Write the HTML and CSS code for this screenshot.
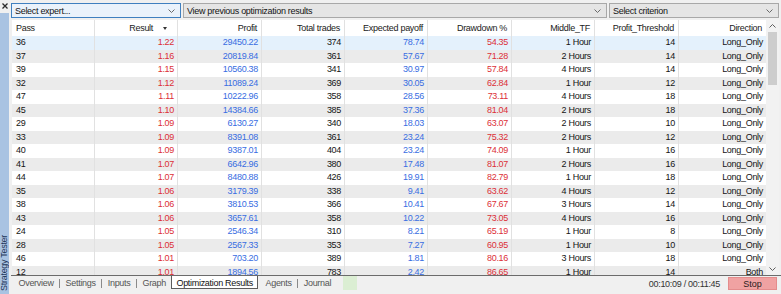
FILE: index.html
```html
<!DOCTYPE html>
<html lang="en">
<head>
    <meta charset="UTF-8">
    <title>Strategy Tester - Optimization Results</title>
    <link rel="stylesheet" href="styles.css">
</head>
<body>
    <div class="tester">
        <!-- Docked panel handle -->
        <aside class="side">
            <div class="side-close">
                <svg width="6" height="6" viewBox="0 0 6 6"><path d="M0.5 0.5L5.5 5.5M5.5 0.5L0.5 5.5" stroke="#2b2b2b" stroke-width="1.3"/></svg>
            </div>
            <div class="side-strip"><span class="side-title">Strategy Tester</span></div>
        </aside>

        <main class="panel">
            <!-- Top selectors -->
            <div class="toolbar">
                <div class="combo focus combo-expert">
                    <span>Select expert...</span>
                    <svg width="7" height="4" viewBox="0 0 7 4"><polyline points="0.5,0.5 3.5,3.5 6.5,0.5" fill="none" stroke="#6a6a6a"/></svg>
                </div>
                <div class="combo combo-results">
                    <span>View previous optimization results</span>
                    <svg width="7" height="4" viewBox="0 0 7 4"><polyline points="0.5,0.5 3.5,3.5 6.5,0.5" fill="none" stroke="#6a6a6a"/></svg>
                </div>
                <div class="combo combo-criterion">
                    <span>Select criterion</span>
                    <svg width="7" height="4" viewBox="0 0 7 4"><polyline points="0.5,0.5 3.5,3.5 6.5,0.5" fill="none" stroke="#6a6a6a"/></svg>
                </div>
            </div>

            <!-- Results table -->
            <div class="results">
                <div class="grid">
                    <div class="row head">
                        <span>Pass</span>
                        <span class="sorted">Result<i class="sort"></i></span>
                        <span>Profit</span>
                        <span>Total trades</span>
                        <span>Expected payoff</span>
                        <span>Drawdown %</span>
                        <span>Middle_TF</span>
                        <span>Profit_Threshold</span>
                        <span>Direction</span>
                    </div>
                    <div class="row sel"><span>36</span><span class="red">1.22</span><span class="blue">29450.22</span><span>374</span><span class="blue">78.74</span><span class="red">54.35</span><span>1 Hour</span><span>14</span><span>Long_Only</span></div>
                    <div class="row alt"><span>37</span><span class="red">1.16</span><span class="blue">20819.84</span><span>361</span><span class="blue">57.67</span><span class="red">71.28</span><span>2 Hours</span><span>14</span><span>Long_Only</span></div>
                    <div class="row"><span>39</span><span class="red">1.15</span><span class="blue">10560.38</span><span>341</span><span class="blue">30.97</span><span class="red">57.84</span><span>4 Hours</span><span>14</span><span>Long_Only</span></div>
                    <div class="row alt"><span>32</span><span class="red">1.12</span><span class="blue">11089.24</span><span>369</span><span class="blue">30.05</span><span class="red">62.84</span><span>1 Hour</span><span>12</span><span>Long_Only</span></div>
                    <div class="row"><span>47</span><span class="red">1.11</span><span class="blue">10222.96</span><span>358</span><span class="blue">28.56</span><span class="red">73.11</span><span>4 Hours</span><span>18</span><span>Long_Only</span></div>
                    <div class="row alt"><span>45</span><span class="red">1.10</span><span class="blue">14384.66</span><span>385</span><span class="blue">37.36</span><span class="red">81.04</span><span>2 Hours</span><span>18</span><span>Long_Only</span></div>
                    <div class="row"><span>29</span><span class="red">1.09</span><span class="blue">6130.27</span><span>340</span><span class="blue">18.03</span><span class="red">63.07</span><span>2 Hours</span><span>10</span><span>Long_Only</span></div>
                    <div class="row alt"><span>33</span><span class="red">1.09</span><span class="blue">8391.08</span><span>361</span><span class="blue">23.24</span><span class="red">75.32</span><span>2 Hours</span><span>12</span><span>Long_Only</span></div>
                    <div class="row"><span>40</span><span class="red">1.09</span><span class="blue">9387.01</span><span>404</span><span class="blue">23.24</span><span class="red">74.09</span><span>1 Hour</span><span>16</span><span>Long_Only</span></div>
                    <div class="row alt"><span>41</span><span class="red">1.07</span><span class="blue">6642.96</span><span>380</span><span class="blue">17.48</span><span class="red">81.07</span><span>2 Hours</span><span>16</span><span>Long_Only</span></div>
                    <div class="row"><span>44</span><span class="red">1.07</span><span class="blue">8480.88</span><span>426</span><span class="blue">19.91</span><span class="red">82.79</span><span>1 Hour</span><span>18</span><span>Long_Only</span></div>
                    <div class="row alt"><span>35</span><span class="red">1.06</span><span class="blue">3179.39</span><span>338</span><span class="blue">9.41</span><span class="red">63.62</span><span>4 Hours</span><span>12</span><span>Long_Only</span></div>
                    <div class="row"><span>38</span><span class="red">1.06</span><span class="blue">3810.53</span><span>366</span><span class="blue">10.41</span><span class="red">67.67</span><span>3 Hours</span><span>14</span><span>Long_Only</span></div>
                    <div class="row alt"><span>43</span><span class="red">1.06</span><span class="blue">3657.61</span><span>358</span><span class="blue">10.22</span><span class="red">73.05</span><span>4 Hours</span><span>16</span><span>Long_Only</span></div>
                    <div class="row"><span>24</span><span class="red">1.05</span><span class="blue">2546.34</span><span>310</span><span class="blue">8.21</span><span class="red">65.19</span><span>1 Hour</span><span>8</span><span>Long_Only</span></div>
                    <div class="row alt"><span>28</span><span class="red">1.05</span><span class="blue">2567.33</span><span>353</span><span class="blue">7.27</span><span class="red">60.95</span><span>1 Hour</span><span>10</span><span>Long_Only</span></div>
                    <div class="row"><span>46</span><span class="red">1.01</span><span class="blue">703.20</span><span>389</span><span class="blue">1.81</span><span class="red">80.16</span><span>3 Hours</span><span>18</span><span>Long_Only</span></div>
                    <div class="row alt"><span>12</span><span class="red">1.01</span><span class="blue">1894.56</span><span>783</span><span class="blue">2.42</span><span class="red">86.65</span><span>1 Hour</span><span>14</span><span>Both</span></div>
                </div>
                <div class="scrollbar">
                    <div class="sb-btn">
                        <svg width="7" height="4" viewBox="0 0 7 4"><polyline points="0.5,3.5 3.5,0.5 6.5,3.5" fill="none" stroke="#5f5f5f"/></svg>
                    </div>
                    <div class="sb-thumb"></div>
                    <div class="sb-track"></div>
                    <div class="sb-btn">
                        <svg width="7" height="4" viewBox="0 0 7 4"><polyline points="0.5,0.5 3.5,3.5 6.5,0.5" fill="none" stroke="#5f5f5f"/></svg>
                    </div>
                </div>
            </div>

            <!-- Bottom tabs and status -->
            <div class="tabbar">
                <span class="tab">Overview</span><span class="sep"></span>
                <span class="tab">Settings</span><span class="sep"></span>
                <span class="tab">Inputs</span><span class="sep"></span>
                <span class="tab">Graph</span>
                <span class="tab active">Optimization Results</span>
                <span class="tab">Agents</span><span class="sep"></span>
                <span class="tab">Journal</span>
                <span class="progress-cell"></span>
                <span class="spacer"></span>
                <span class="timer">00:10:09 / 00:11:45</span>
                <button class="stop">Stop</button>
            </div>
        </main>
    </div>
</body>
</html>
```

FILE: styles.css
```css
* { margin: 0; padding: 0; box-sizing: border-box; }
body {
    font-family: "Liberation Sans", Arial, sans-serif;
    font-size: 9px;
    letter-spacing: -0.3px;
    color: #141414;
    background: #f0f0f0;
    width: 781px;
    height: 294px;
    overflow: hidden;
}
.tester { display: flex; height: 294px; }

/* left handle */
.side { width: 11px; display: flex; flex-direction: column; }
.side-close { height: 13px; padding: 3px 0 0 2px; line-height: 0; }
.side-strip {
    flex: 1;
    width: 9px;
    background: #a9c3e2;
    display: flex;
    align-items: flex-end;
    justify-content: center;
    padding-bottom: 3px;
}
.side-title {
    writing-mode: vertical-rl;
    transform: rotate(180deg);
    font-size: 9px;
    line-height: 9px;
    color: #1d3558;
    white-space: nowrap;
}

.panel { flex: 1; display: flex; flex-direction: column; min-width: 0; }

/* selectors */
.toolbar { height: 20px; display: flex; gap: 2px; padding-top: 3px; }
.combo {
    height: 15px;
    border: 1px solid #a8a8a8;
    background: #e5e5e5;
    display: flex;
    align-items: center;
    justify-content: space-between;
    padding: 0 5px 0 3px;
    white-space: nowrap;
}
.combo.focus { border-color: #3f7fbf; background: #eaf2fb; }
.combo-expert { width: 170px; }
.combo-results { width: 424px; }
.combo-criterion { width: 170px; }

/* table */
.results {
    flex: 1;
    display: flex;
    overflow: hidden;
    padding-left: 1px;
    border-bottom: 1px solid #6b6b6b;
    min-height: 0;
}
.grid { width: 754px; background: #fff; overflow: hidden; }
.row {
    display: grid;
    grid-template-columns: 83px 83px 84px 83px 83px 84px 83px 84px 87px;
    height: 13.5px;
    line-height: 13.5px;
}
.row > span {
    text-align: right;
    padding-right: 3px;
    border-right: 1px solid #e1e1e1;
    white-space: nowrap;
    overflow: hidden;
}
.row > span:first-child { text-align: left; padding-left: 4px; }
.row > span:last-child { border-right: none; }
.row.head { height: 16px; line-height: 16px; color: #1a1a1a; }
.row.head > span { padding-right: 4px; }
.row.head > .sorted {
    display: flex;
    align-items: center;
    justify-content: flex-end;
    padding-right: 10px;
}
.sort {
    margin-left: 10px;
    border-left: 2.5px solid transparent;
    border-right: 2.5px solid transparent;
    border-top: 3px solid #333;
}
.row.alt { background: #ebebeb; }
.row.sel { background: #e4f1fc; }
.red { color: #dc2f37; }
.blue { color: #386de2; }

.scrollbar { width: 13px; display: flex; flex-direction: column; background: #f2f2f2; }
.sb-btn { height: 12px; display: flex; align-items: center; justify-content: center; }
.sb-thumb { height: 53px; margin: 0 2px; background: #cdcdcd; }
.sb-track { flex: 1; }

/* tabs & status */
.tabbar {
    height: 18px;
    display: flex;
    align-items: flex-start;
    padding-left: 2px;
    padding-right: 4px;
    color: #555;
}
.tab { padding: 0 5.5px; height: 13px; line-height: 14px; white-space: nowrap; }
.sep { width: 1px; height: 9px; margin-top: 3px; background: #8a8a8a; }
.tab.active {
    background: #fff;
    color: #111;
    border: 1px solid #5c5c5c;
    border-top: none;
    padding: 0 4px;
    height: 13px;
    margin-right: 2px;
}
.progress-cell { width: 14px; height: 14px; margin-left: 6px; background: #dbeed3; }
.spacer { flex: 1; }
.timer { line-height: 14px; color: #333; margin-right: 8px; margin-top: 1px; }
.stop {
    width: 49px;
    height: 13px;
    margin-top: 1px;
    border: 1px solid #e48c8c;
    background: #f0a2a2;
    font: inherit;
    color: #2a1a1a;
    cursor: pointer;
}
```
